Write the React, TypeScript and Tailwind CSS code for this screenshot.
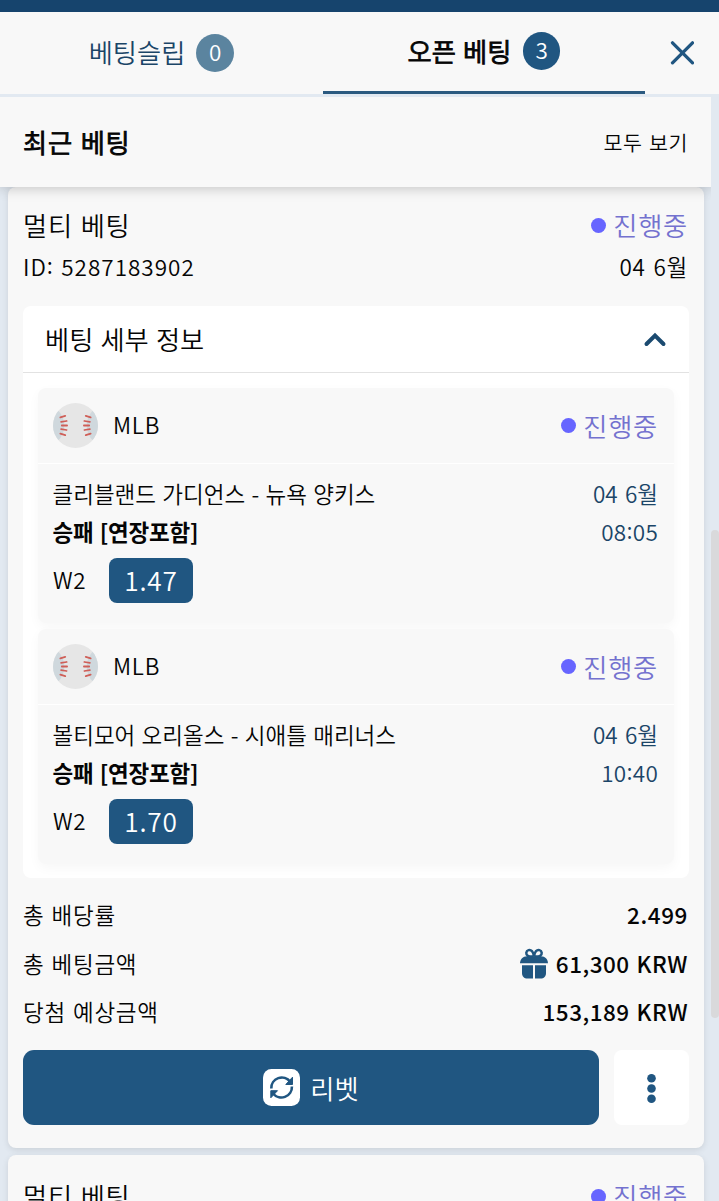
import React from "react";

function Baseball() {
  return (
    <svg viewBox="0 0 46 46" className="size-[45px] shrink-0">
      <defs>
        <clipPath id="ball">
          <circle cx="23" cy="23" r="23" />
        </clipPath>
      </defs>
      <g clipPath="url(#ball)">
        <rect width="46" height="46" fill="#e6e6e6" />
        <circle cx="-11" cy="23" r="22.5" fill="#cfd8dd" />
        <circle cx="57" cy="23" r="22.5" fill="#cfd8dd" />
      </g>
      <g stroke="#cf5f58" strokeWidth="1.8" strokeLinecap="round">
        <path d="M7.500 14.700l5-1.600M8.300 19.200l5.600-.8M9 23h5.400M8.300 26.800l5.600.8M7.500 31.300l5 1.600" />
        <path d="M38.500 14.700l-5-1.600M37.700 19.200l-5.600-.8M37 23h-5.400M37.700 26.800l-5.600.8M38.500 31.300l-5 1.600" />
      </g>
    </svg>
  );
}

function Gift() {
  return (
    <svg viewBox="0 0 28 31" className="h-[31px] w-7 shrink-0" fill="#205681">
      <g fill="none" stroke="#205681" strokeWidth="2.500">
        <path d="M13.500 8.500C8.500 9 6 7.500 6.300 4.800C6.700 2 10 1.100 12 3.200C13.200 4.500 13.700 6.500 13.900 8.500" />
        <path d="M14.500 8.500C19.500 9 22 7.500 21.700 4.800C21.300 2 18 1.100 16 3.200C14.800 4.500 14.300 6.500 14.100 8.500" />
      </g>
      <path d="M0 15.300C.2 11 2.800 8.300 7 8.200H21C25.200 8.300 27.800 11 28 15.300Z" />
      <path d="M2 17.300H13V30.500H7.500C4 30.500 2 28.500 2 25Z" />
      <path d="M15 17.300H26V25C26 28.500 24 30.500 20.500 30.500H15Z" />
    </svg>
  );
}

function Refresh() {
  return (
    <svg viewBox="0 0 37 37" className="size-[37px] shrink-0">
      <rect width="37" height="37" rx="8.500" fill="#fff" />
      <g fill="none" stroke="#205681" strokeWidth="2.600">
        <path d="M8.300 19.500A10.500 10.500 0 0 1 27.200 12.700" />
        <path d="M28.900 17.500A10.500 10.500 0 0 1 10 24.300" />
      </g>
      <g fill="#205681" stroke="#205681" strokeWidth="1" strokeLinejoin="round">
        <path d="M29.500 8.200V15.500H22.800Z" />
        <path d="M7.800 28.800V21.700H14.500Z" />
      </g>
    </svg>
  );
}

function Status() {
  return (
    <div className="flex items-center gap-[7px] pr-px text-[26.25px] leading-[36px] tracking-[0.75px] text-[#7472cf]">
      <span className="size-[15px] rounded-full bg-[#6765ff]" />
      <span>진행중</span>
    </div>
  );
}

type Match = { teams: string; hour: string; minute: string; odd: string };

const matches: Match[] = [
  { teams: "클리블랜드 가디언스 - 뉴욕 양키스", hour: "08", minute: "05", odd: "1.47" },
  { teams: "볼티모어 오리올스 - 시애틀 매리너스", hour: "10", minute: "40", odd: "1.70" },
];

function MatchCard({ teams, hour, minute, odd }: Match) {
  return (
    <section className="h-[235px] rounded-lg bg-[#f8f8f8] shadow-[0_4px_12px_rgba(0,0,0,0.035)]">
      <div className="flex h-[76px] items-center justify-between border-b border-white px-[15px]">
        <div className="flex items-center gap-[15px]">
          <Baseball />
          <span className="pb-[2px] tracking-[0.75px]">MLB</span>
        </div>
        <Status />
      </div>
      <div className="px-[15px] pt-[10px]">
        <div className="flex h-[38px] items-center justify-between">
          <span className="-ml-[0.5px]">{teams}</span>
          <span className="pr-px text-[#1b4567] [word-spacing:2.3px]">04 6월</span>
        </div>
        <div className="flex h-[38px] items-center justify-between">
          <span className="-ml-[0.5px] font-bold tracking-[-0.2px]">승패 [연장포함]</span>
          <span className="pr-px pb-[2px] tracking-[0.25px] text-[#1b4567]">
            {hour}
            <span className="align-[2px]">:</span>
            {minute}
          </span>
        </div>
        <div className="mt-[8px] flex h-[45px] items-center">
          <span className="w-14 pb-[2px] tracking-[0.75px]">W2</span>
          <span className="flex h-[45px] w-[84px] items-center justify-center rounded-lg bg-[#205681] text-[26.25px] tracking-[0.75px] text-white">
            {odd}
          </span>
        </div>
      </div>
    </section>
  );
}

function BetHeader({ id }: { id: string }) {
  return (
    <>
      <div className="flex h-[38px] items-center justify-between">
        <span className="text-[26.25px] tracking-[0.75px]">멀티 베팅</span>
        <Status />
      </div>
      <div className="mt-[3px] flex h-[38px] items-center justify-between">
        <span className="pb-[2px] tracking-[1px]">
          ID<span className="align-[2px]">:</span> {id}
        </span>
        <span className="pr-px tracking-[0.75px] [word-spacing:2px]">04 6월</span>
      </div>
    </>
  );
}

export default function App() {
  return (
    <div className="flex h-[1201px] w-[719px] flex-col overflow-hidden whitespace-nowrap bg-[#e2e9f1] font-['Noto_Sans_CJK_KR',sans-serif] text-[22.5px] leading-none font-[350] text-[#050505] [word-spacing:1.3px]">
      <div className="h-3 shrink-0 bg-[#16446d]" />
      <header className="flex h-[82px] shrink-0 bg-[#f8f8f8]">
        <div className="flex w-[323px] items-center justify-center gap-[11px] pb-px text-[26.25px] text-[#1b4567]">
          <span>베팅슬립</span>
          <span className="flex size-[38px] items-center justify-center rounded-full bg-[#5b849f] pb-[3px] text-[22.5px] text-white">0</span>
        </div>
        <div className="flex w-[322px] items-center justify-center gap-[11.5px] border-b-[3px] border-[#2b5a80] pb-px text-[26.25px]">
          <span className="[-webkit-text-stroke:0.9px_#050505]">오픈 베팅</span>
          <span className="flex size-[37.5px] items-center justify-center rounded-full bg-[#205681] pb-[3px] text-[22.5px] text-white">3</span>
        </div>
        <div className="flex w-[74px] items-center justify-center pb-px">
          <svg viewBox="0 0 24 24" className="size-6" fill="none" stroke="#205681" strokeWidth="3.300" strokeLinecap="round">
            <path d="M2.500 1.800l20 20M22.500 1.800L2.500 21.800" />
          </svg>
        </div>
      </header>
      <div className="mt-[3px] flex min-h-0 flex-1">
        <main className="flex w-[711px] flex-col overflow-hidden">
          <div className="z-10 flex h-[90px] shrink-0 items-center justify-between bg-[#f8f8f8] px-[23px] shadow-[0_2px_12px_rgba(0,0,0,0.2)]">
            <h1 className="text-[26.25px] tracking-[0.75px] [-webkit-text-stroke:0.9px_#050505]">최근 베팅</h1>
            <span className="text-[20.625px] tracking-[0.55px]">모두 보기</span>
          </div>
          <article className="ml-2 h-[961px] w-[696px] shrink-0 rounded-lg bg-[#f8f8f8] px-[15px] pt-[19px] shadow-[0_2px_6px_rgba(0,0,0,0.1)]">
            <BetHeader id="5287183902" />
            <div className="mt-[21px] h-[572px] rounded-lg bg-white">
              <div className="flex h-[67px] items-center justify-between border-b border-[#e2e2e2] px-[22px]">
                <span className="text-[26.25px]">베팅 세부 정보</span>
                <svg viewBox="0 0 24 15" className="h-[15px] w-6" fill="none" stroke="#1b4a70" strokeWidth="4" strokeLinecap="round">
                  <path d="M3.500 12l8.500-8.500l8.500 8.500" />
                </svg>
              </div>
              <div className="flex flex-col gap-[6px] px-[15px] pt-[15px]">
                {matches.map((m) => (
                  <MatchCard key={m.teams} {...m} />
                ))}
              </div>
            </div>
            <div className="mt-[12px] flex flex-col tracking-[0.75px]">
              <div className="flex h-[49px] items-center justify-between">
                <span>총 배당률</span>
                <span className="pr-px font-medium tracking-[0.6px]">2.499</span>
              </div>
              <div className="flex h-[49px] items-center justify-between">
                <span>총 베팅금액</span>
                <span className="flex items-center gap-2 pr-px font-medium tracking-[0.5px]">
                  <Gift />
                  61,300 KRW
                </span>
              </div>
              <div className="flex h-[47px] items-center justify-between">
                <span>당첨 예상금액</span>
                <span className="pr-px font-medium tracking-[0.5px]">153,189 KRW</span>
              </div>
            </div>
            <div className="mt-[15px] flex gap-[15px]">
              <button className="flex h-[75px] w-[576px] items-center justify-center gap-[10px] rounded-[11px] bg-[#205681] text-[26.25px] text-white">
                <Refresh />
                <span className="pt-[2px]">리벳</span>
              </button>
              <button className="flex size-[75px] items-center justify-center rounded-lg bg-white pt-px">
                <svg viewBox="0 0 9 29" className="h-[29px] w-[9px]" fill="#205681">
                  <circle cx="4.500" cy="4.300" r="4.300" />
                  <circle cx="4.500" cy="14.500" r="4.300" />
                  <circle cx="4.500" cy="24.700" r="4.300" />
                </svg>
              </button>
            </div>
          </article>
          <article className="mt-[7px] ml-2 h-[200px] w-[696px] shrink-0 rounded-lg bg-[#f8f8f8] px-[15px] pt-[22px] shadow-[0_2px_6px_rgba(0,0,0,0.1)]">
            <BetHeader id="5287183901" />
          </article>
        </main>
        <div className="w-2 pt-[433px]">
          <div className="h-[488px] rounded-[4px] bg-[#d9d9db]" />
        </div>
      </div>
    </div>
  );
}
